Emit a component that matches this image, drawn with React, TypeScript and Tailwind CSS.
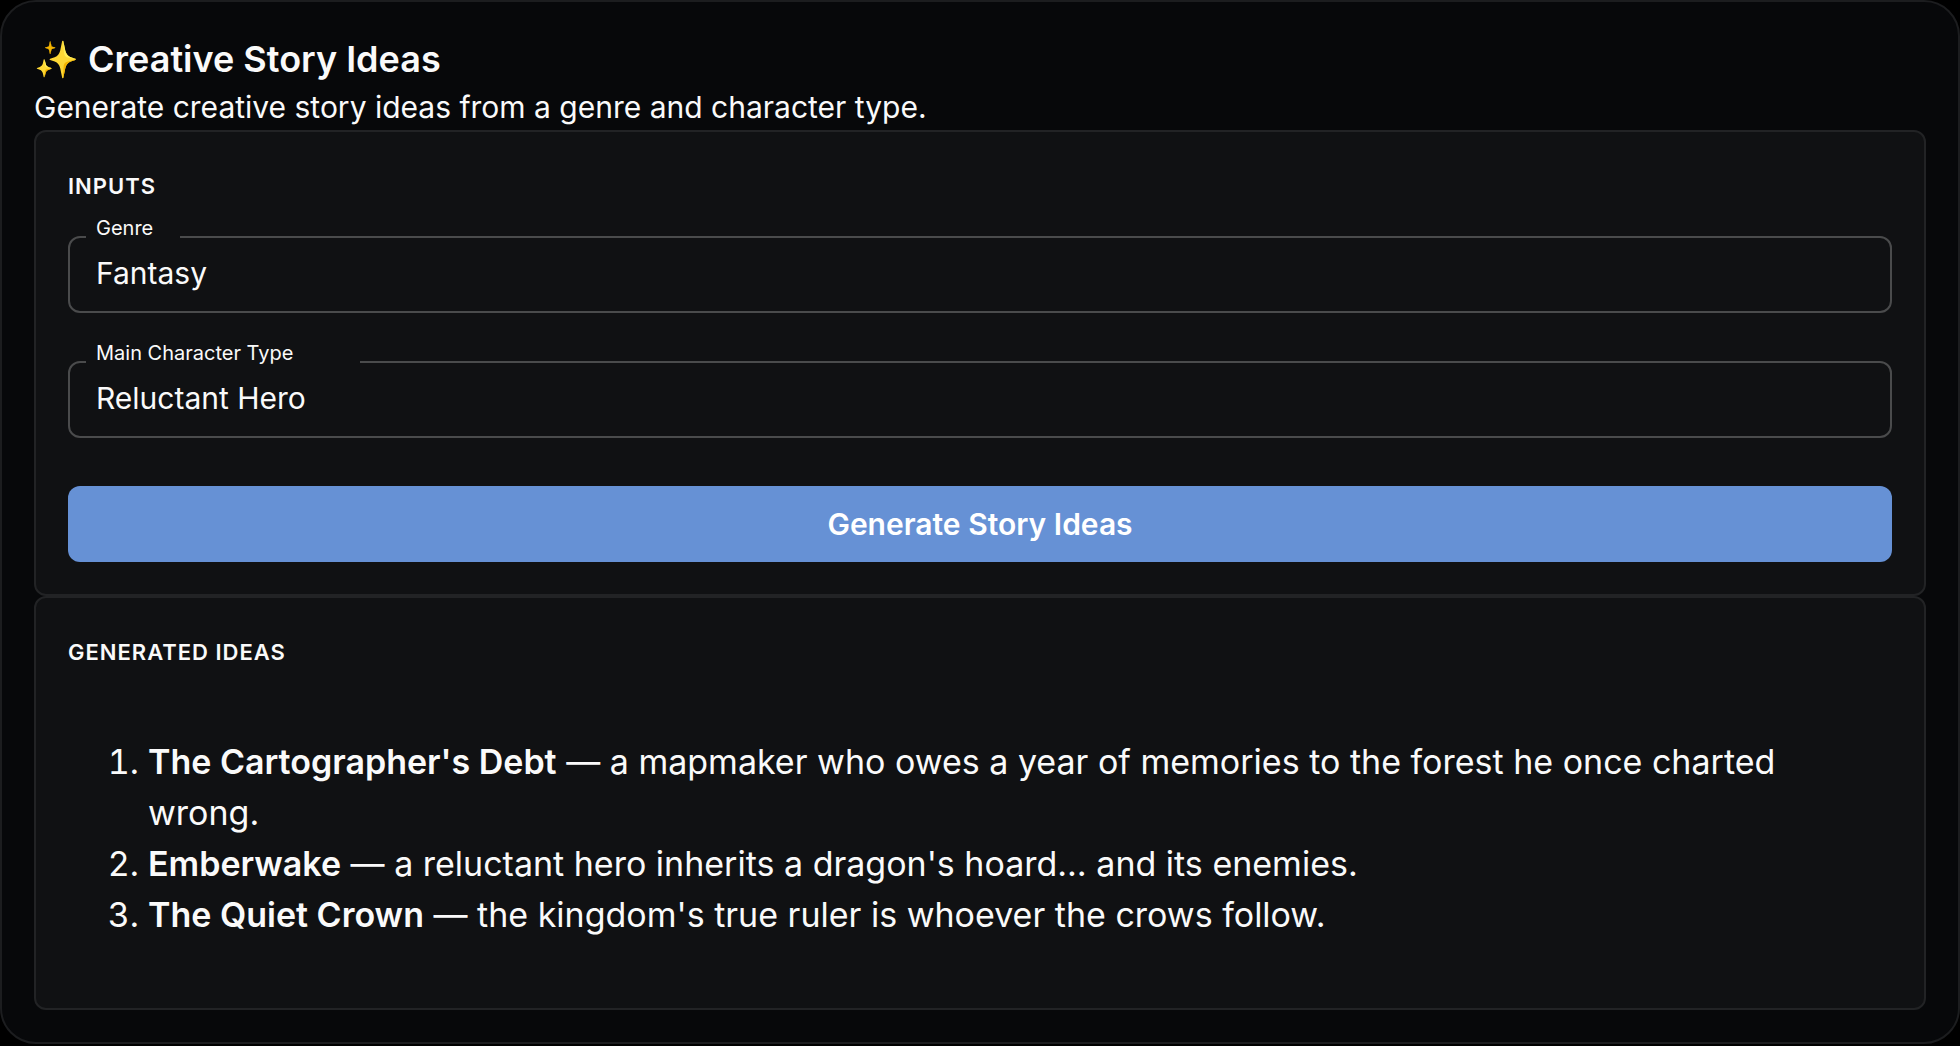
import { ReactNode, useId, useState } from 'react';
import clsx from 'clsx';

type Idea = {
  title: string;
  text: string;
};

type FieldProps = {
  label: string;
  value: string;
  labelClassName?: string;
  onChange(value: string): void;
};

const ideas: Array<Idea> = [
  { title: "The Cartographer's Debt", text: 'a mapmaker who owes a year of memories to the forest he once charted wrong.' },
  { title: 'Emberwake', text: "a reluctant hero inherits a dragon's hoard… and its enemies." },
  { title: 'The Quiet Crown', text: "the kingdom's true ruler is whoever the crows follow." },
];

const Panel = ({ title, children }: { title: string, children: ReactNode }) => (
  <section className="rounded-xl border-2 border-[#222325] bg-[#101113] px-8 pt-[38px] pb-8">
    <h2 className="text-[22px] leading-8 font-semibold tracking-[1px] uppercase">{title}</h2>
    {children}
  </section>
);

// The label sits on the top border and hides the part of it behind the text
const Field = ({ label, value, labelClassName, onChange }: FieldProps) => {
  const id = useId();

  return (
    <div className="relative">
      <input
        id={id}
        type="text"
        value={value}
        onChange={(e) => onChange(e.target.value)}
        className="block h-[77px] w-full rounded-xl border-2 border-[#4a4b4c] bg-transparent px-[26px] pb-[3px] text-[30px] outline-none focus:border-[#6691d5]"
      />
      <label
        htmlFor={id}
        className={clsx('absolute -top-5 left-[18px] bg-[#101113] pl-2.5 text-[20px] leading-6 whitespace-nowrap', labelClassName)}
      >
        {label}
      </label>
    </div>
  );
};

export default function App() {
  const [genre, setGenre] = useState('Fantasy');
  const [character, setCharacter] = useState('Reluctant Hero');

  return (
    <div className="min-h-screen bg-black font-['Inter',sans-serif] text-[#fafafa]">
      <main className="rounded-[36px] border-2 border-[#1c1d1f] bg-[#07080a] p-8">
        <header>
          <h1 className="text-[36px] leading-[50px] font-semibold">✨ Creative Story Ideas</h1>
          <p className="text-[30px] leading-[46px]">Generate creative story ideas from a genre and character type.</p>
        </header>

        <Panel title="Inputs">
          <form className="mt-[34px] flex flex-col gap-12" onSubmit={(e) => e.preventDefault()}>
            <Field label="Genre" value={genre} onChange={setGenre} labelClassName="w-[94px]" />
            <Field label="Main Character Type" value={character} onChange={setCharacter} labelClassName="w-[274px]" />
            <button type="submit" className="h-[76px] cursor-pointer rounded-xl bg-[#6691d5] text-[30px] font-semibold text-white">
              Generate Story Ideas
            </button>
          </form>
        </Panel>

        <Panel title="Generated Ideas">
          <ol className="mt-[68px] mb-9 list-decimal pr-10 pl-20 text-[34px] leading-[51px]">
            {ideas.map((idea) => (
              <li key={idea.title}>
                <strong className="font-semibold">{idea.title}</strong> — {idea.text}
              </li>
            ))}
          </ol>
        </Panel>
      </main>
    </div>
  );
}
